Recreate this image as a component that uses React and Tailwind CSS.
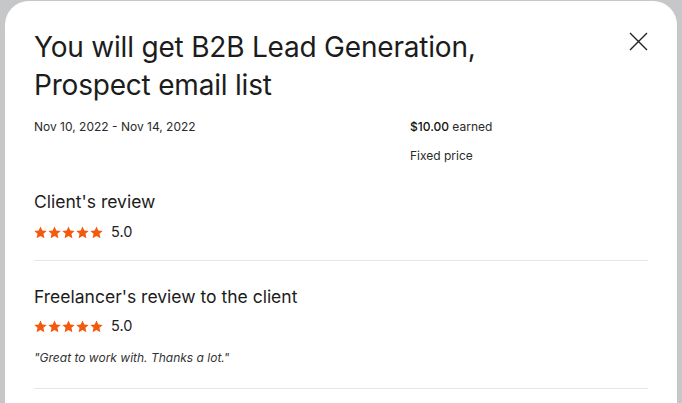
const font = { fontFamily: 'Inter, "Liberation Sans", sans-serif' };

function Star() {
  return (
    <svg width="13" height="13" viewBox="0 0 24 24" className="shrink-0">
      <path
        fill="#f45a0f"
        d="M12 .8l3.4 7.3 8 .9-5.9 5.5 1.6 7.9L12 18.4l-7.1 4 1.6-7.9L.6 9l8-.9z"
      />
    </svg>
  );
}

function Rating({ value }) {
  return (
    <div className="flex items-center h-[20px]">
      <div className="flex gap-[1px]">
        {[0, 1, 2, 3, 4].map((i) => (
          <Star key={i} />
        ))}
      </div>
      <span className="ml-[8px] text-[14.5px] text-[#222]">{value}</span>
    </div>
  );
}

function CloseIcon() {
  return (
    <svg width="19" height="19" viewBox="0 0 19 19" fill="none" stroke="#222" strokeWidth="1.4">
      <path d="M1 1l17 17M18 1L1 18" />
    </svg>
  );
}

export default function App() {
  return (
    <div className="w-[682px] h-[403px] overflow-hidden bg-[#c6c7c9] px-[5px] pt-[1px]" style={font}>
      <div className="h-[420px] bg-white rounded-t-[24px] px-[29px] pt-[27px] text-[#1c1c1c]">
        <div className="flex justify-between items-start">
          <h1 className="text-[28px] leading-[38px] font-normal tracking-[-0.2px] w-[480px]">
            You will get B2B Lead Generation, Prospect email list
          </h1>
          <button className="mt-[4px]">
            <CloseIcon />
          </button>
        </div>

        <div className="flex mt-[13px] text-[12px] text-[#2a2a2a]">
          <div className="w-[376px] leading-[20px]">Nov 10, 2022 - Nov 14, 2022</div>
          <div className="leading-[20px]">
            <div>
              <span className="font-medium text-[#111]">$10.00</span> earned
            </div>
            <div className="mt-[9px]">Fixed price</div>
          </div>
        </div>

        <section className="mt-[24px] pb-[18px] border-b border-[#e3e6ea]">
          <h2 className="text-[17.5px] leading-[24px]">Client's review</h2>
          <div className="mt-[8px]">
            <Rating value="5.0" />
          </div>
        </section>

        <section className="pt-[24px] pb-[22px] border-b border-[#e3e6ea]">
          <h2 className="text-[17.5px] leading-[24px]">Freelancer's review to the client</h2>
          <div className="mt-[7px]">
            <Rating value="5.0" />
          </div>
          <p className="mt-[14px] text-[12px] leading-[16px] italic text-[#333]">
            "Great to work with. Thanks a lot."
          </p>
        </section>
      </div>
    </div>
  );
}
